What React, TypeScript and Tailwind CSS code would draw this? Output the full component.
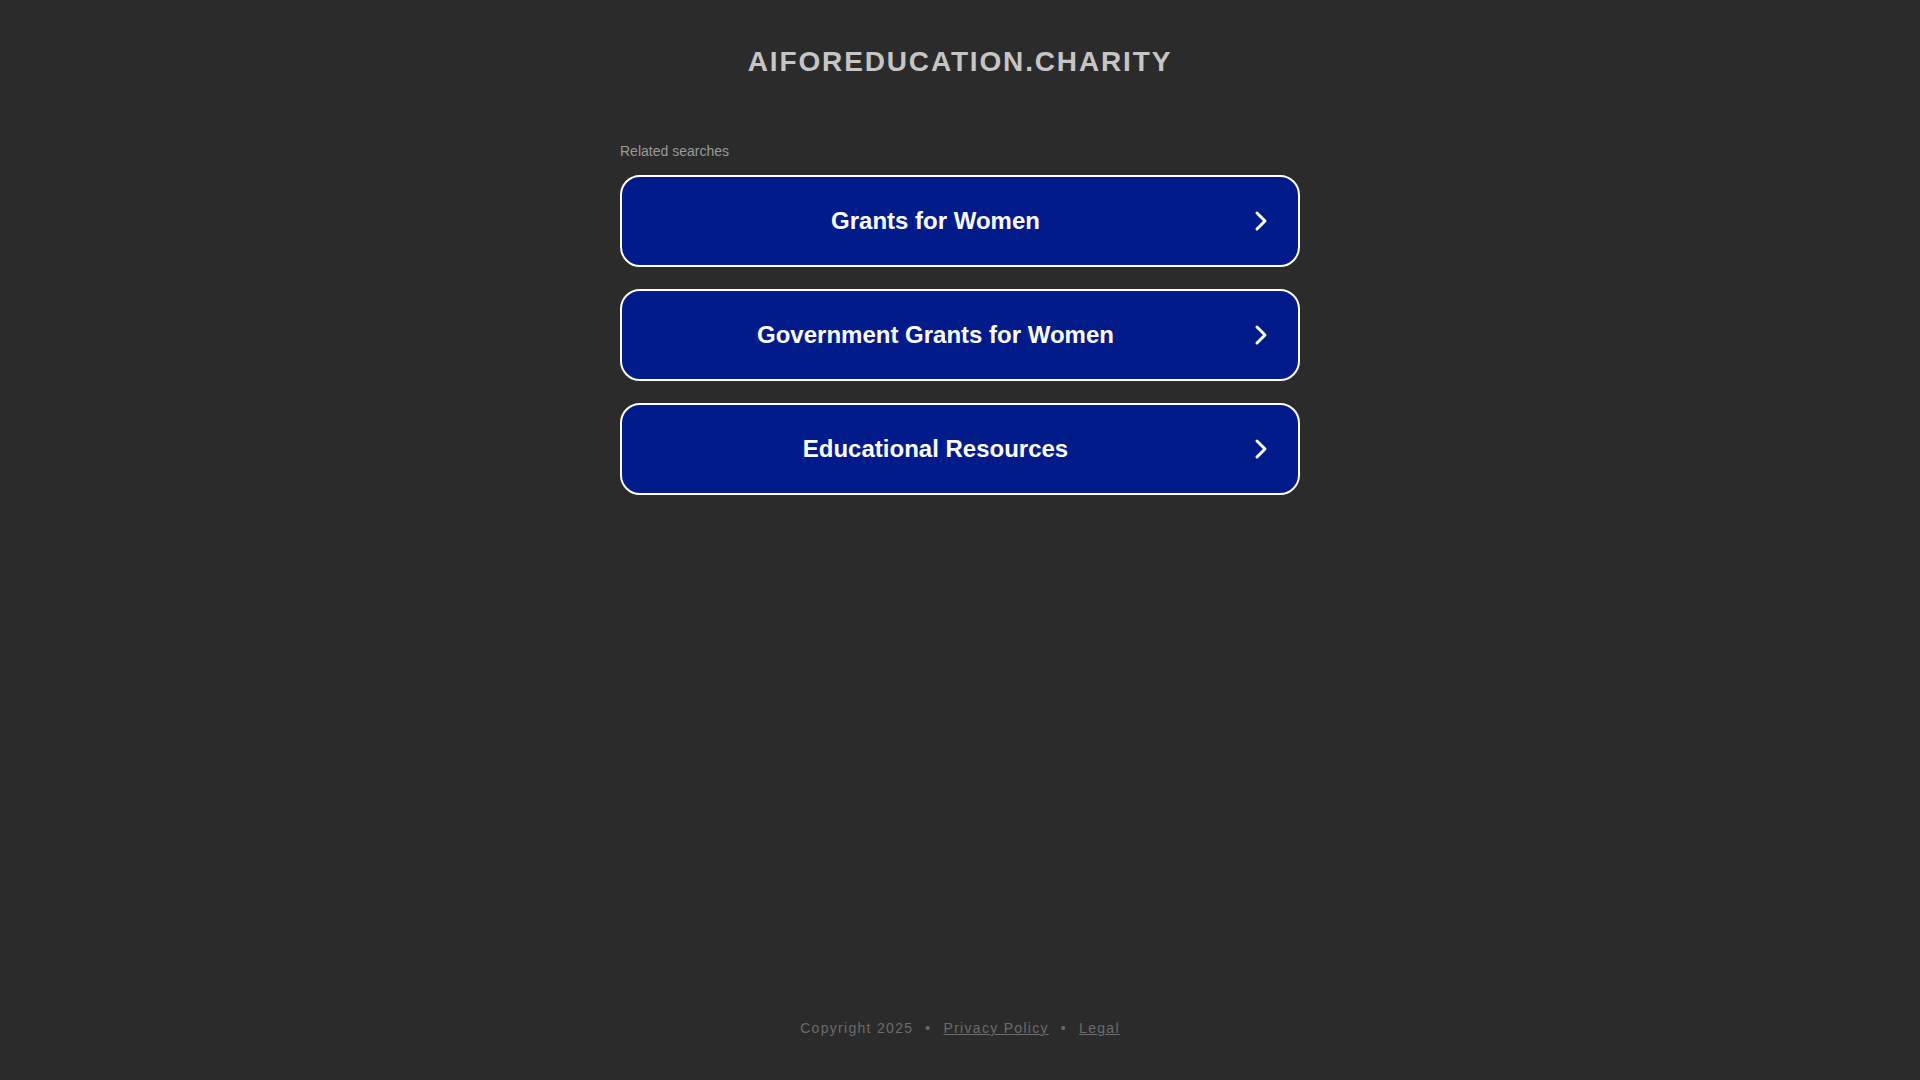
import { useState } from 'react';

const searches = ['Grants for Women', 'Government Grants for Women', 'Educational Resources'];

function Chevron() {
  return (
    <svg width="14" height="22" viewBox="0 0 14 22" fill="none" className="shrink-0">
      <path d="M3 3l8 8-8 8" stroke="#ffffff" strokeWidth="3" strokeLinecap="round" strokeLinejoin="round" />
    </svg>
  );
}

export default function App() {
  const [active, setActive] = useState<string | null>(null);

  return (
    <div className="min-h-screen w-full bg-[#2b2b2b] flex flex-col items-center font-['Liberation_Sans',Arial,sans-serif]">
      {/* Header */}
      <h1 className="mt-[45px] text-[28px] leading-[34px] font-bold tracking-[1.85px] text-[#c5c5c5]">
        AIFOREDUCATION.CHARITY
      </h1>

      {/* Related searches */}
      <div className="w-[680px] mt-[64px]">
        <p className="text-[14px] leading-[16px] text-[#9a9a9a] mb-[16px]">Related searches</p>
        <div className="flex flex-col gap-[22px]">
          {searches.map((s) => (
            <a
              key={s}
              href="#"
              onClick={(e) => {
                e.preventDefault();
                setActive(s);
              }}
              className={`flex items-center h-[92px] rounded-[20px] border-2 border-white pr-[30px] ${
                active === s ? 'bg-[#0a2aa8]' : 'bg-[#011b8a]'
              }`}
            >
              <span className="flex-1 mr-[5px] text-center text-[24px] font-bold text-white">{s}</span>
              <Chevron />
            </a>
          ))}
        </div>
      </div>

      {/* Footer */}
      <footer className="mt-auto mb-[41px] flex items-center gap-[12px] text-[14px] tracking-[1.3px] text-[#6b6b6b]">
        <span>Copyright 2025</span>
        <span>•</span>
        <a href="#" className="underline">Privacy Policy</a>
        <span>•</span>
        <a href="#" className="underline">Legal</a>
      </footer>
    </div>
  );
}
